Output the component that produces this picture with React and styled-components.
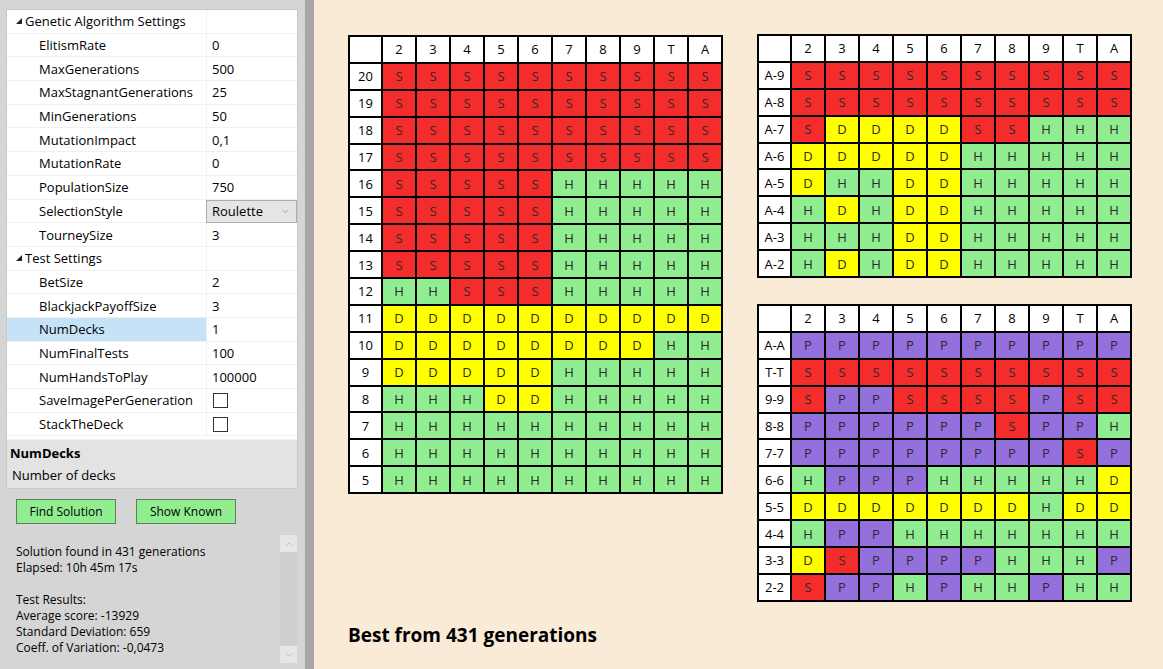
import React from 'react';
import styled, { createGlobalStyle } from 'styled-components';
import { ChevronDown, ChevronUp } from 'lucide-react';

const GlobalStyle = createGlobalStyle`
  html, body {
    margin: 0;
    padding: 0;
    height: 100%;
  }
  body {
    font-family: "Open Sans", "Noto Sans", sans-serif;
    color: #000;
  }
  #root {
    height: 100%;
  }
`;

const Window = styled.div`
  display: flex;
  width: 1163px;
  height: 669px;
  overflow: hidden;
`;

const SidePanel = styled.aside`
  width: 305px;
  flex-shrink: 0;
  box-sizing: border-box;
  background: #d5d5d5;
  padding: 10px 8px 0 7px;
  display: flex;
  flex-direction: column;
`;

const Splitter = styled.div`
  width: 9px;
  flex-shrink: 0;
  background: #a8a8a8;
`;

const Canvas = styled.main`
  flex: 1;
  background: #faebd7;
  padding: 35px 0 0 34px;
  box-sizing: border-box;
`;

/* ---------- property grid ---------- */

const PropertyBox = styled.div`
  background: #fff;
  box-shadow: 0 0 0 1px #c9c9c9;
  display: flex;
  flex-direction: column;
`;

const PropList = styled.div`
  height: 427px;
  font-size: 13px;
`;

const PropRow = styled.div`
  display: grid;
  grid-template-columns: 199px 1fr;
  height: 23.7px;
  box-sizing: border-box;
  border-bottom: 1px solid #f0f0f0;
`;

const NameCell = styled.div`
  display: flex;
  align-items: center;
  gap: 3px;
  padding-left: ${p => (p.$category ? '9px' : '32px')};
  background: ${p => (p.$selected ? '#c6e2f6' : 'transparent')};
  white-space: nowrap;
`;

const ValueCell = styled.div`
  display: flex;
  align-items: center;
  padding-left: 5px;
  border-left: 1px solid #f0f0f0;
`;

const CheckBox = styled.span`
  width: 13px;
  height: 13px;
  border: 1px solid #333;
  background: #fff;
  margin-left: 1px;
`;

const Combo = styled.div`
  flex: 1;
  align-self: stretch;
  margin: 0 0 -1px -6px;
  display: flex;
  align-items: center;
  justify-content: space-between;
  padding: 0 6px 0 5px;
  background: #e5e5e5;
  border: 1px solid #acacac;
  color: #000;
  svg {
    color: #777;
  }
`;

const Description = styled.div`
  box-sizing: border-box;
  height: 49px;
  margin-top: 2px;
  border-top: 1px solid #f2f2f2;
  background: #e3e3e3;
  padding: 2px 3px 0 3px;
  font-size: 13px;
  line-height: 22px;
  strong {
    display: block;
  }
  span {
    padding-left: 2px;
  }
`;

const ButtonRow = styled.div`
  display: flex;
  gap: 20px;
  padding-left: 9px;
  margin-top: 11px;
`;

const ActionButton = styled.button`
  width: 100px;
  height: 25px;
  background: #90ee90;
  border: 1px solid #5e7e5e;
  font-family: inherit;
  font-size: 12px;
  color: #000;
  padding: 0;
`;

const OutputBox = styled.div`
  margin-top: 11px;
  height: 128px;
  display: flex;
`;

const OutputText = styled.div`
  flex: 1;
  padding: 9px 0 0 9px;
  font-size: 12px;
  line-height: 16px;
  white-space: pre;
`;

const ScrollBar = styled.div`
  width: 17px;
  background: #cfcfcf;
  display: flex;
  flex-direction: column;
  justify-content: space-between;
`;

const ScrollArrow = styled.div`
  height: 17px;
  background: #e6e6e6;
  display: flex;
  align-items: center;
  justify-content: center;
  color: #a6a6a6;
`;

/* ---------- strategy charts ---------- */

const ChartArea = styled.div`
  display: flex;
  gap: 34px;
  align-items: flex-start;
`;

const ChartColumn = styled.div`
  display: flex;
  flex-direction: column;
  gap: 26px;
  margin-top: -1px;
`;

const ChartGrid = styled.div`
  display: grid;
  grid-template-columns: 31px repeat(10, 32px);
  grid-auto-rows: 24.9px;
  gap: 2px;
  padding: 2px;
  background: #000;
  width: max-content;
`;

const cellColors = {
  S: '#f52c2c',
  H: '#90ee90',
  D: '#ffff00',
  P: '#9370db',
};

const Cell = styled.div`
  background: ${p => cellColors[p.$kind] || '#fff'};
  display: flex;
  align-items: center;
  justify-content: center;
  font-size: 13px;
  color: ${p => (p.$kind ? '#2b2b2b' : '#000')};
`;

const Title = styled.h2`
  margin: 20px 0 0 0;
  font-size: 19px;
  font-weight: 700;
  line-height: 26px;
`;

const dealer = ['2', '3', '4', '5', '6', '7', '8', '9', 'T', 'A'];

const hardTotals = [
  ['20', 'SSSSSSSSSS'],
  ['19', 'SSSSSSSSSS'],
  ['18', 'SSSSSSSSSS'],
  ['17', 'SSSSSSSSSS'],
  ['16', 'SSSSSHHHHH'],
  ['15', 'SSSSSHHHHH'],
  ['14', 'SSSSSHHHHH'],
  ['13', 'SSSSSHHHHH'],
  ['12', 'HHSSSHHHHH'],
  ['11', 'DDDDDDDDDD'],
  ['10', 'DDDDDDDDHH'],
  ['9', 'DDDDDHHHHH'],
  ['8', 'HHHDDHHHHH'],
  ['7', 'HHHHHHHHHH'],
  ['6', 'HHHHHHHHHH'],
  ['5', 'HHHHHHHHHH'],
];

const softTotals = [
  ['A-9', 'SSSSSSSSSS'],
  ['A-8', 'SSSSSSSSSS'],
  ['A-7', 'SDDDDSSHHH'],
  ['A-6', 'DDDDDHHHHH'],
  ['A-5', 'DHHDDHHHHH'],
  ['A-4', 'HDHDDHHHHH'],
  ['A-3', 'HHHDDHHHHH'],
  ['A-2', 'HDHDDHHHHH'],
];

const pairs = [
  ['A-A', 'PPPPPPPPPP'],
  ['T-T', 'SSSSSSSSSS'],
  ['9-9', 'SPPSSSSPSS'],
  ['8-8', 'PPPPPPSPPH'],
  ['7-7', 'PPPPPPPPSP'],
  ['6-6', 'HPPPHHHHHD'],
  ['5-5', 'DDDDDDDHDD'],
  ['4-4', 'HPPHHHHHHH'],
  ['3-3', 'DSPPPPHHHP'],
  ['2-2', 'SPPHPHHPHH'],
];

function Chart({ rows }) {
  return (
    <ChartGrid>
      <Cell />
      {dealer.map(d => (
        <Cell key={d}>{d}</Cell>
      ))}
      {rows.map(([label, moves]) => (
        <React.Fragment key={label}>
          <Cell>{label}</Cell>
          {moves.split('').map((m, i) => (
            <Cell key={i} $kind={m}>{m}</Cell>
          ))}
        </React.Fragment>
      ))}
    </ChartGrid>
  );
}

const Expander = () => (
  <svg width="6" height="6" viewBox="0 0 6 6">
    <polygon points="6,0 6,6 0,6" fill="#222" />
  </svg>
);

const settings = [
  { category: 'Genetic Algorithm Settings' },
  { name: 'ElitismRate', value: '0' },
  { name: 'MaxGenerations', value: '500' },
  { name: 'MaxStagnantGenerations', value: '25' },
  { name: 'MinGenerations', value: '50' },
  { name: 'MutationImpact', value: '0,1' },
  { name: 'MutationRate', value: '0' },
  { name: 'PopulationSize', value: '750' },
  { name: 'SelectionStyle', value: 'Roulette', combo: true },
  { name: 'TourneySize', value: '3' },
  { category: 'Test Settings' },
  { name: 'BetSize', value: '2' },
  { name: 'BlackjackPayoffSize', value: '3' },
  { name: 'NumDecks', value: '1', selected: true },
  { name: 'NumFinalTests', value: '100' },
  { name: 'NumHandsToPlay', value: '100000' },
  { name: 'SaveImagePerGeneration', check: true },
  { name: 'StackTheDeck', check: true },
];

const output = `Solution found in 431 generations
Elapsed: 10h 45m 17s

Test Results:
Average score: -13929
Standard Deviation: 659
Coeff. of Variation: -0,0473`;

export default function App() {
  return (
    <>
      <GlobalStyle />
      <Window>
        <SidePanel>
          <PropertyBox>
            <PropList>
              {settings.map((s, i) =>
                s.category ? (
                  <PropRow key={i}>
                    <NameCell $category>
                      <Expander />
                      {s.category}
                    </NameCell>
                    <ValueCell />
                  </PropRow>
                ) : (
                  <PropRow key={i}>
                    <NameCell $selected={s.selected}>{s.name}</NameCell>
                    <ValueCell>
                      {s.check ? (
                        <CheckBox />
                      ) : s.combo ? (
                        <Combo>
                          {s.value}
                          <ChevronDown size={9} strokeWidth={1.5} />
                        </Combo>
                      ) : (
                        s.value
                      )}
                    </ValueCell>
                  </PropRow>
                )
              )}
            </PropList>
            <Description>
              <strong>NumDecks</strong>
              <span>Number of decks</span>
            </Description>
          </PropertyBox>

          <ButtonRow>
            <ActionButton>Find Solution</ActionButton>
            <ActionButton>Show Known</ActionButton>
          </ButtonRow>

          <OutputBox>
            <OutputText>{output}</OutputText>
            <ScrollBar>
              <ScrollArrow>
                <ChevronUp size={10} strokeWidth={1.5} />
              </ScrollArrow>
              <ScrollArrow>
                <ChevronDown size={10} strokeWidth={1.5} />
              </ScrollArrow>
            </ScrollBar>
          </OutputBox>
        </SidePanel>
        <Splitter />
        <Canvas>
          <ChartArea>
            <Chart rows={hardTotals} />
            <ChartColumn>
              <Chart rows={softTotals} />
              <Chart rows={pairs} />
            </ChartColumn>
          </ChartArea>
          <Title>Best from 431 generations</Title>
        </Canvas>
      </Window>
    </>
  );
}
